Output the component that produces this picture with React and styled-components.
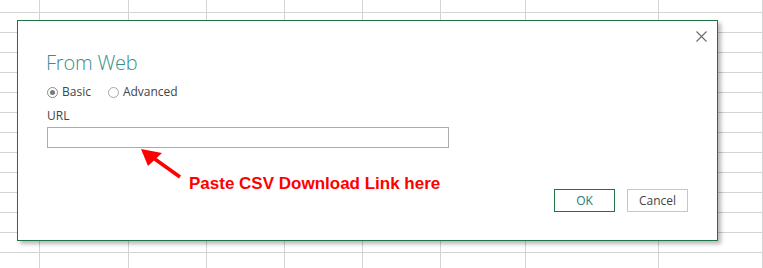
import React, { useState } from 'react';
import styled, { createGlobalStyle } from 'styled-components';

const GlobalStyle = createGlobalStyle`
  html, body {
    margin: 0;
    padding: 0;
    background: #ffffff;
  }
  body {
    font-family: "Segoe UI", "Open Sans", "Noto Sans", Arial, sans-serif;
  }
`;

// spreadsheet behind the dialog
const columns = [40, 89, 78, 78, 78, 78, 85, 133];
const rowCount = 14;

const Screen = styled.div`
  position: relative;
  width: 763px;
  height: 268px;
  overflow: hidden;
  background: #fff;
`;

const Sheet = styled.div`
  display: grid;
  grid-template-columns: ${(props) => props.cols.map((c) => `${c}px`).join(' ')} 1fr;
  grid-template-rows: 13px repeat(${(props) => props.rows - 1}, 20px);
`;

const Cell = styled.div`
  box-sizing: border-box;
  border-right: 1px solid #d4d4d4;
  border-bottom: 1px solid #d4d4d4;
  background: #fff;
`;

const Dialog = styled.div`
  position: absolute;
  left: 17px;
  top: 20px;
  width: 701px;
  height: 221px;
  box-sizing: border-box;
  border: 1px solid #217346;
  background: #fff;
  box-shadow: 3px 3px 4px rgba(0, 0, 0, 0.28);
  display: flex;
  flex-direction: column;
  padding: 30px 29px 28px 29px;
`;

const CloseButton = styled.button`
  position: absolute;
  top: 9px;
  right: 9px;
  width: 13px;
  height: 13px;
  padding: 0;
  border: none;
  background: transparent;
  cursor: pointer;
  display: flex;
  align-items: center;
  justify-content: center;
`;

const Title = styled.h1`
  margin: 0 0 0 -1px;
  font-family: "Segoe UI Light", "Open Sans", "Noto Sans", sans-serif;
  font-weight: 300;
  font-size: 20px;
  line-height: 24px;
  color: #3a8e89;
  letter-spacing: -0.2px;
`;

const RadioGroup = styled.div`
  display: flex;
  align-items: center;
  gap: 17px;
  margin-top: 9px;
  height: 16px;
`;

const RadioOption = styled.label`
  display: flex;
  align-items: center;
  gap: 4px;
  font-size: 12px;
  line-height: 16px;
  color: #444;
  cursor: pointer;
`;

const RadioCircle = styled.span`
  width: 11px;
  height: 11px;
  box-sizing: border-box;
  border-radius: 50%;
  border: 1px solid ${(props) => (props.checked ? '#8a8a8a' : '#a6a6a6')};
  display: flex;
  align-items: center;
  justify-content: center;
  &::after {
    content: '';
    width: 5px;
    height: 5px;
    border-radius: 50%;
    background: ${(props) => (props.checked ? '#7a7a7a' : 'transparent')};
  }
`;

const FieldLabel = styled.div`
  margin-top: 8px;
  font-size: 12px;
  line-height: 16px;
  color: #444;
`;

const UrlInput = styled.input`
  margin-top: 3px;
  width: 402px;
  height: 21px;
  box-sizing: border-box;
  border: 1px solid #ababab;
  outline: none;
  padding: 0 4px;
  font-size: 12px;
  font-family: inherit;
`;

const Footer = styled.div`
  margin-top: auto;
  display: flex;
  justify-content: flex-end;
  gap: 12px;
`;

const Button = styled.button`
  width: 61px;
  height: 23px;
  box-sizing: border-box;
  padding: 0;
  background: #fff;
  border: 1px solid ${(props) => (props.primary ? '#217346' : '#c6c6c6')};
  color: ${(props) => (props.primary ? '#2b7a6e' : '#444')};
  font-family: inherit;
  font-size: 12px;
  cursor: pointer;
`;

// red annotation drawn over the screenshot
const ArrowMark = styled.svg`
  position: absolute;
  left: 117px;
  top: 122px;
`;

const Note = styled.div`
  position: absolute;
  left: 171px;
  top: 153px;
  font-family: "Liberation Sans", Arial, sans-serif;
  font-weight: bold;
  font-size: 17px;
  line-height: 20px;
  color: #ff0000;
  white-space: nowrap;
`;

const App = () => {
  const [mode, setMode] = useState('basic');

  const cells = [];
  for (let r = 0; r < rowCount; r++) {
    for (let c = 0; c <= columns.length; c++) {
      cells.push(<Cell key={`${r}-${c}`} />);
    }
  }

  return (
    <>
      <GlobalStyle />
      <Screen>
        <Sheet cols={columns} rows={rowCount}>
          {cells}
        </Sheet>
        <Dialog>
          <CloseButton aria-label="Close">
            <svg width="11" height="11" viewBox="0 0 11 11">
              <path d="M0.5 0.5 L10.5 10.5 M10.5 0.5 L0.5 10.5" stroke="#6b6b6b" strokeWidth="1.1" />
            </svg>
          </CloseButton>
          <Title>From Web</Title>
          <RadioGroup>
            <RadioOption onClick={() => setMode('basic')}>
              <RadioCircle checked={mode === 'basic'} />
              Basic
            </RadioOption>
            <RadioOption onClick={() => setMode('advanced')}>
              <RadioCircle checked={mode === 'advanced'} />
              Advanced
            </RadioOption>
          </RadioGroup>
          <FieldLabel>URL</FieldLabel>
          <UrlInput type="text" />
          <Footer>
            <Button primary>OK</Button>
            <Button>Cancel</Button>
          </Footer>
          <ArrowMark width="50" height="40" viewBox="0 0 50 40">
            <path d="M17 14 L45 34" stroke="#ff0000" strokeWidth="3.6" strokeLinecap="butt" />
            <polygon points="6,6 27,10 13,23" fill="#ff0000" />
          </ArrowMark>
          <Note>Paste CSV Download Link here</Note>
        </Dialog>
      </Screen>
    </>
  );
};

export default App;
